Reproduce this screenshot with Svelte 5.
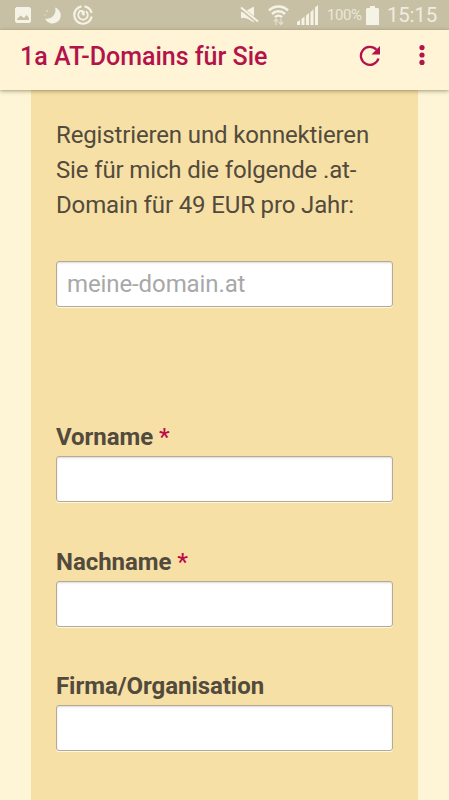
<script>
  let domain = $state("");
  let fields = $state([
    { id: "vorname", label: "Vorname", required: true, value: "" },
    { id: "nachname", label: "Nachname", required: true, value: "" },
    { id: "firma", label: "Firma/Organisation", required: false, value: "" }
  ]);
</script>

<div class="screen">
  <div class="status">
    <div class="notifications">
      <svg width="16" height="16" viewBox="0 0 16 16">
        <path fill="currentColor" fill-rule="evenodd" d="M1.5 0h13L16 1.500v13L14.500 16h-13L0 14.500v-13zM2 13h12V11l-2.500-3L9 11 5.500 8.500 2 12z" />
      </svg>
      <svg width="19" height="18" viewBox="0 0 19 18">
        <path fill="currentColor" d="M12 1.500A8.200 8.200 0 1 1 2 12.500 8.500 8.500 0 0 0 12 1.500z" />
        <circle cx="4" cy="5" r="1" fill="currentColor" opacity=".5" />
        <circle cx="2" cy="9" r=".8" fill="currentColor" opacity=".5" />
      </svg>
      <svg width="20" height="20" viewBox="0 0 20 20" fill="none" stroke="currentColor" stroke-width="2.200">
        <path d="M11.500 1.300A8.800 8.800 0 0 1 18.600 8M18.700 11.500A8.800 8.800 0 1 1 8.500 1.300" />
        <path d="M13 6.200a4.800 4.800 0 1 1-6 0M6 5.800h3.500v4M10.800 6v4.500" stroke-width="1.800" />
      </svg>
    </div>
    <div class="indicators">
      <svg class="mute" width="19" height="18" viewBox="0 0 19 18">
        <path fill="currentColor" d="M1 6h4l3-2.300 6-3.200v16L8 13 5 12H1z" />
        <path d="M0 1.500 18 16" stroke="#c8c0a4" stroke-width="4" />
        <path d="M1 1.500 18 15.500" stroke="currentColor" stroke-width="2" />
      </svg>
      <svg class="wifi" width="21" height="22" viewBox="0 0 21 22" fill="none" stroke="currentColor">
        <path stroke-width="2.500" d="M1 6.500a13.500 13.500 0 0 1 19 0M4 10a9.200 9.200 0 0 1 13 0M7 13.200a5 5 0 0 1 7 0" />
        <path stroke-width="1.300" opacity=".6" d="M8 21v-6M5.800 17.500 8 15l2.200 2.500M13 14.500v6M10.800 18l2.200 2.500 2.200-2.500" />
      </svg>
      <svg class="signal" width="22" height="20" viewBox="0 0 22 20" fill="currentColor">
        <path d="M0 17l3-2v5H0zM4.500 14l3-2.500V20h-3zM9 10.500 12 8v12H9zM13.500 7l3-2.500V20h-3zM18 2.500 21 0v20h-3z" />
      </svg>
      <span class="percent">100%</span>
      <svg class="battery" width="13" height="19" viewBox="0 0 13 19" fill="currentColor">
        <path d="M4 0h5v2h3l1 1v16H0V3l1-1h3z" />
      </svg>
      <span class="clock">15:15</span>
    </div>
  </div>

  <header>
    <h1>1a AT-Domains für Sie</h1>
    <button class="reload" aria-label="Neu laden">
      <svg width="22" height="22" viewBox="0 0 22 22">
        <path fill="none" stroke="currentColor" stroke-width="2.300" d="M19.500 13.500a9 9 0 1 1-2-8.800" />
        <path fill="currentColor" d="M21 1v8.500H12.500z" />
      </svg>
    </button>
    <button class="menu" aria-label="Menü">
      <svg width="6" height="20" viewBox="0 0 6 20" fill="currentColor">
        <circle cx="3" cy="2.600" r="2.600" />
        <circle cx="3" cy="10" r="2.600" />
        <circle cx="3" cy="17.400" r="2.600" />
      </svg>
    </button>
  </header>

  <main>
    <form>
      <label class="intro" for="domain">Registrieren und konnektieren Sie für mich die folgende .at-Domain für 49 EUR pro Jahr:</label>
      <input id="domain" class="domain" placeholder="meine-domain.at" bind:value={domain} />

      {#each fields as field}
        <div class="field">
          <label for={field.id}>{field.label}{#if field.required}{" "}<span class="star">*</span>{/if}</label>
          <input id={field.id} bind:value={field.value} />
        </div>
      {/each}
    </form>
  </main>
</div>

<style>
  :global(body) {
    margin: 0;
    overflow: hidden;
    background: #fdf5d5;
  }

  .screen {
    display: flex;
    flex-direction: column;
    height: 800px;
    overflow: hidden;
    font-family: Roboto, sans-serif;
    color: #524b3d;
  }

  svg {
    display: block;
    flex: none;
  }

  .status {
    display: flex;
    justify-content: space-between;
    flex: none;
    height: 30px;
    background: #c8c0a4;
    color: #f5f2e6;
  }

  .notifications, .indicators {
    display: flex;
    align-items: center;
  }

  .notifications {
    gap: 11.500px;
    padding-left: 15px;
  }

  .indicators { padding-right: 12px; }

  .wifi { margin-left: 9px; }

  .signal { margin-left: 8px; }

  .percent {
    width: 35px;
    margin-left: 8px;
    font-size: 15px;
    letter-spacing: -0.4px;
    color: #ebe7d8;
  }

  .battery { margin-left: 4px; }

  .clock {
    margin-left: 8px;
    font-size: 20.500px;
    letter-spacing: -0.2px;
    color: #f0ecdf;
  }

  header {
    display: flex;
    align-items: center;
    flex: none;
    position: relative;
    box-sizing: border-box;
    height: 60px;
    padding: 0 24px 0 20px;
    background: #fff4d5;
    color: #b3124b;
    box-shadow: 0 1px 4px rgba(70, 60, 20, 0.5);
  }

  h1 {
    flex: 1;
    margin: 0;
    padding-bottom: 7px;
    font-size: 25px;
    font-weight: 500;
    white-space: nowrap;
  }

  button {
    padding: 0;
    border: none;
    background: none;
    color: inherit;
  }

  .reload { margin: 0 38px 9px 0; }

  .menu { margin-bottom: 10px; }

  main {
    flex: 1;
    padding: 0 31px;
  }

  form {
    box-sizing: border-box;
    height: 100%;
    padding: 28px 25px 0;
    background: #f7e0a5;
  }

  label {
    display: block;
    font-size: 24px;
    font-weight: 700;
    letter-spacing: -0.05px;
    line-height: 35px;
  }

  .intro {
    height: 105px;
    margin-right: -10px;
    font-weight: 400;
    letter-spacing: -0.14px;
  }

  input {
    display: block;
    box-sizing: border-box;
    width: 337px;
    height: 46px;
    padding: 0 10px;
    border: 1px solid #b5aa94;
    border-radius: 3px;
    outline: none;
    background: #fff;
    box-shadow: inset 0 1px 2px rgba(0, 0, 0, 0.15), 0 1px 0 rgba(255, 255, 255, 0.7);
    font: 24px Roboto, sans-serif;
    letter-spacing: -0.1px;
    color: #524b3d;
  }

  input::placeholder {
    color: #a8a8a8;
    opacity: 1;
  }

  .domain { margin: 38px 0 113px; }

  .field { margin-bottom: 42.500px; }

  .field input { margin-top: 1px; }

  .star {
    font-weight: 500;
    color: #bd0d48;
  }
</style>
